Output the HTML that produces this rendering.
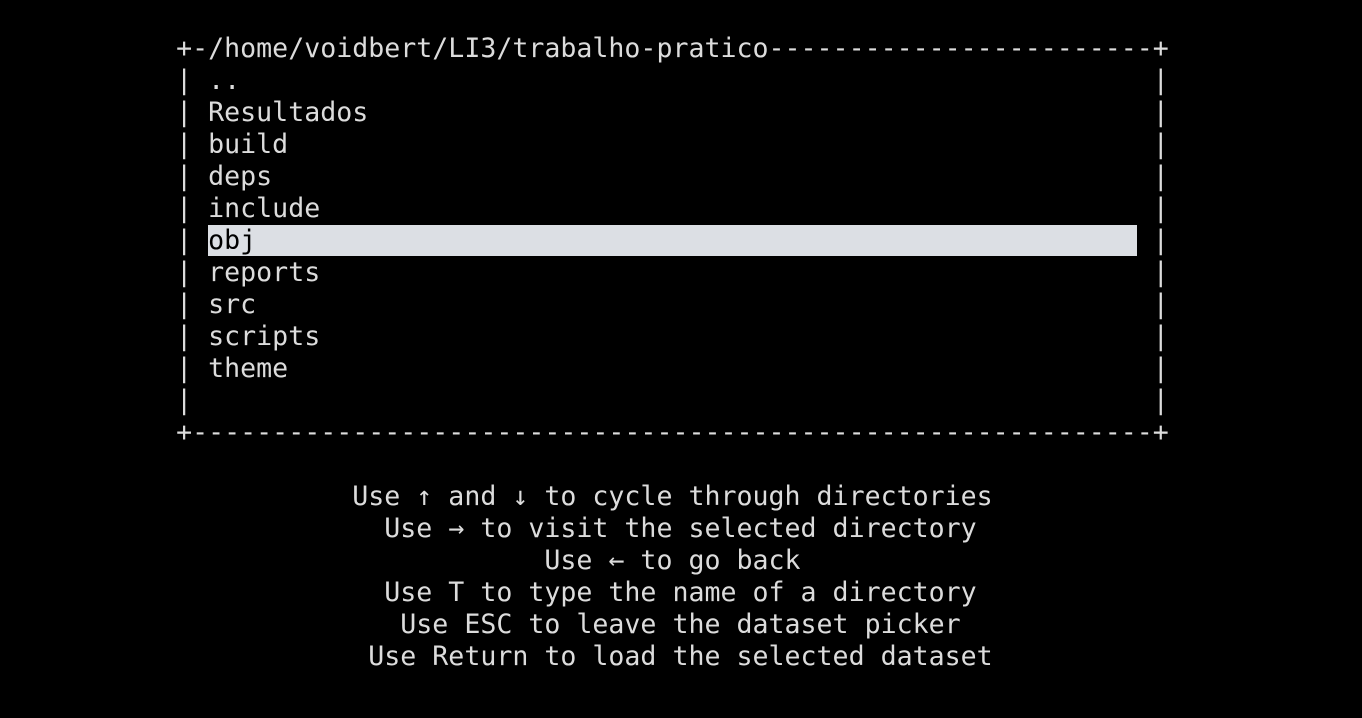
<!DOCTYPE html>
<html><head><meta charset="utf-8"><style>
html,body{margin:0;padding:0;background:#000;width:1362px;height:718px;overflow:hidden}
pre{margin:0;font-family:"DejaVu Sans Mono","Liberation Mono",monospace;font-size:26.6px;line-height:32px;color:#dcdcdc;white-space:pre;position:absolute;left:0;top:1px}
.h{background:#dcdfe4;color:#000}
</style></head><body><pre>

           +-/home/voidbert/LI3/trabalho-pratico------------------------+
           | ..                                                         |
           | Resultados                                                 |
           | build                                                      |
           | deps                                                       |
           | include                                                    |
           | <span class="h">obj                                                       </span> |
           | reports                                                    |
           | src                                                        |
           | scripts                                                    |
           | theme                                                      |
           |                                                            |
           +------------------------------------------------------------+

                      Use ↑ and ↓ to cycle through directories
                        Use → to visit the selected directory
                                  Use ← to go back
                        Use T to type the name of a directory
                         Use ESC to leave the dataset picker
                       Use Return to load the selected dataset
</pre></body></html>
